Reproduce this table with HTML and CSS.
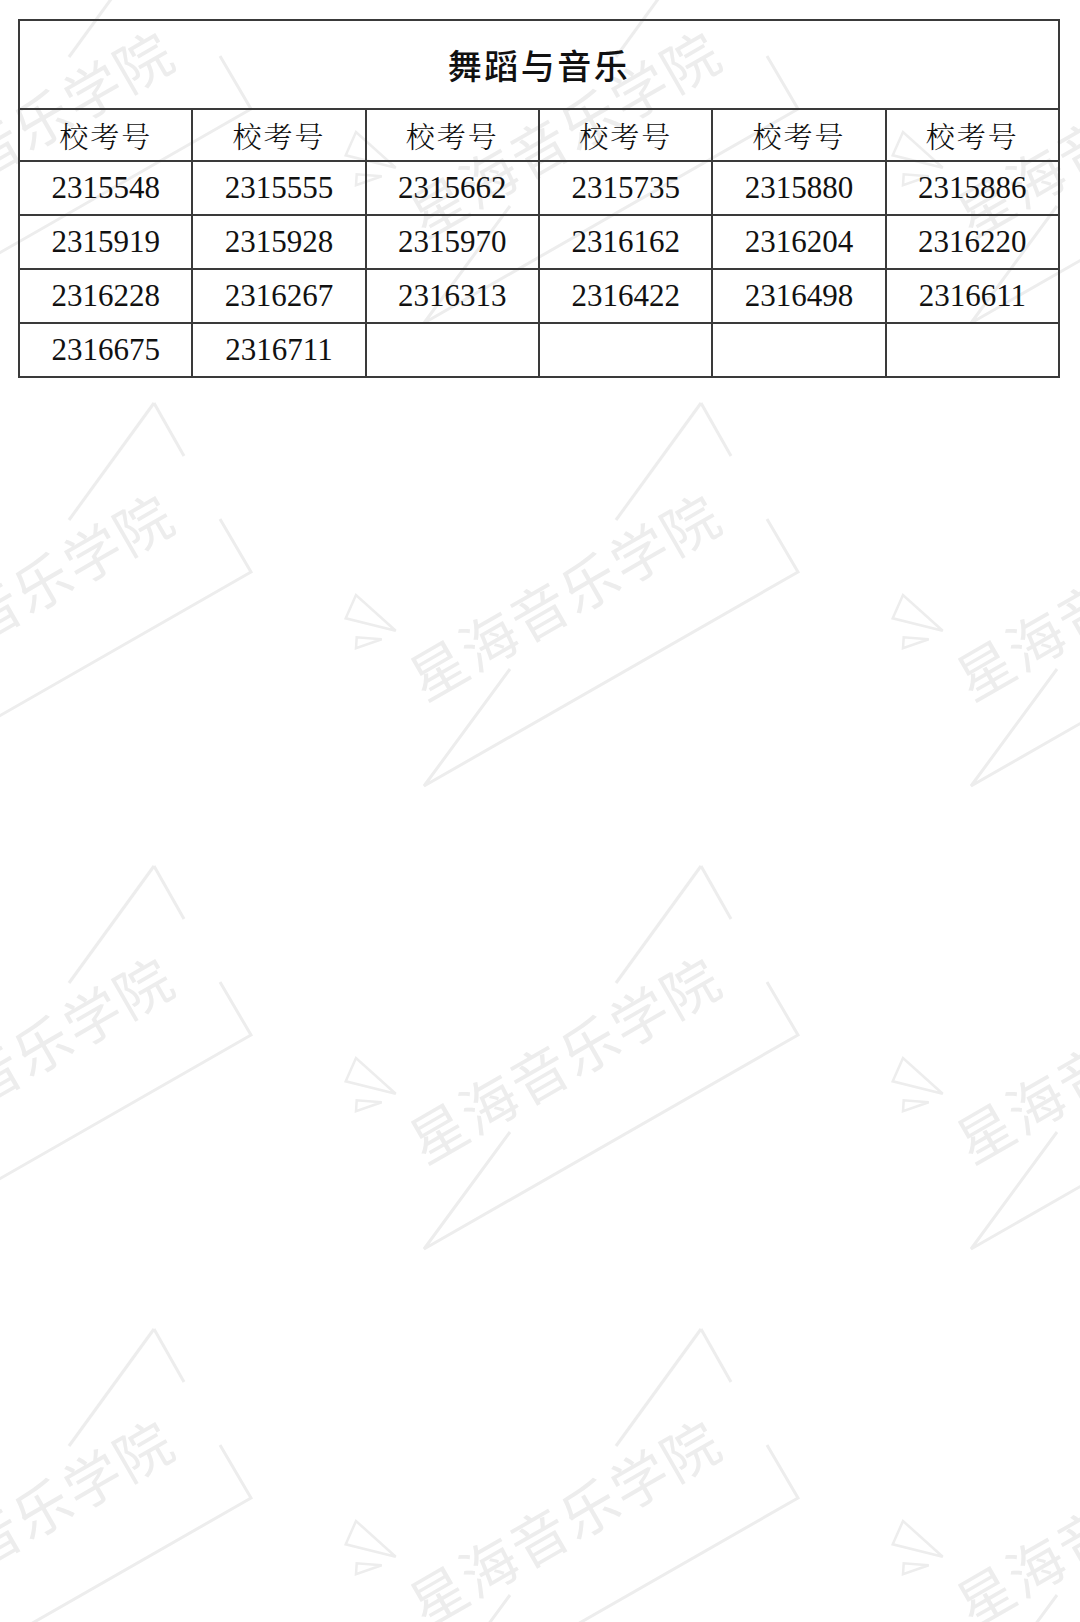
FILE: index.html
```html
<!DOCTYPE html>
<html lang="zh-CN">
<head>
<meta charset="utf-8">
<title>舞蹈与音乐</title>
<link rel="stylesheet" href="styles.css">
</head>
<body>
<svg class="watermark" width="1080" height="1622" viewBox="0 0 1080 1622" aria-hidden="true">
  <defs>
    <g id="wm-shape">
      <path class="wm-line" d="M701 403 L616 520"/>
      <path class="wm-line" d="M510 669 L424 786 L798 572 L767 519"/>
      <path class="wm-line" d="M701 403 L731 456"/>
      <polygon class="wm-thin" points="356,595 345.7,618.3 395.7,630.7"/>
      <polygon class="wm-thin" points="356.7,637.3 356,648.3 381.7,639.3"/>
    </g>
  </defs>
  <g transform="translate(-547 -463)"><use href="#wm-shape"/><text class="wm-text" x="563.5" y="594" transform="rotate(-30 563.5 594)">星海音乐学院</text></g>
  <g transform="translate(0 -463)"><use href="#wm-shape"/><text class="wm-text" x="563.5" y="594" transform="rotate(-30 563.5 594)">星海音乐学院</text></g>
  <g transform="translate(547 -463)"><use href="#wm-shape"/><text class="wm-text" x="563.5" y="594" transform="rotate(-30 563.5 594)">星海音乐学院</text></g>
  <g transform="translate(-547 0)"><use href="#wm-shape"/><text class="wm-text" x="563.5" y="594" transform="rotate(-30 563.5 594)">星海音乐学院</text></g>
  <g transform="translate(0 0)"><use href="#wm-shape"/><text class="wm-text" x="563.5" y="594" transform="rotate(-30 563.5 594)">星海音乐学院</text></g>
  <g transform="translate(547 0)"><use href="#wm-shape"/><text class="wm-text" x="563.5" y="594" transform="rotate(-30 563.5 594)">星海音乐学院</text></g>
  <g transform="translate(-547 463)"><use href="#wm-shape"/><text class="wm-text" x="563.5" y="594" transform="rotate(-30 563.5 594)">星海音乐学院</text></g>
  <g transform="translate(0 463)"><use href="#wm-shape"/><text class="wm-text" x="563.5" y="594" transform="rotate(-30 563.5 594)">星海音乐学院</text></g>
  <g transform="translate(547 463)"><use href="#wm-shape"/><text class="wm-text" x="563.5" y="594" transform="rotate(-30 563.5 594)">星海音乐学院</text></g>
  <g transform="translate(-547 926)"><use href="#wm-shape"/><text class="wm-text" x="563.5" y="594" transform="rotate(-30 563.5 594)">星海音乐学院</text></g>
  <g transform="translate(0 926)"><use href="#wm-shape"/><text class="wm-text" x="563.5" y="594" transform="rotate(-30 563.5 594)">星海音乐学院</text></g>
  <g transform="translate(547 926)"><use href="#wm-shape"/><text class="wm-text" x="563.5" y="594" transform="rotate(-30 563.5 594)">星海音乐学院</text></g>
</svg>

<main class="page">
  <table class="list">
    <tr class="title-row"><th colspan="6" class="title">舞蹈与音乐</th></tr>
    <tr class="head-row">
      <th class="head">校考号</th><th class="head">校考号</th><th class="head">校考号</th>
      <th class="head">校考号</th><th class="head">校考号</th><th class="head">校考号</th>
    </tr>
    <tr class="row">
      <td>2315548</td><td>2315555</td><td>2315662</td><td>2315735</td><td>2315880</td><td>2315886</td>
    </tr>
    <tr class="row">
      <td>2315919</td><td>2315928</td><td>2315970</td><td>2316162</td><td>2316204</td><td>2316220</td>
    </tr>
    <tr class="row">
      <td>2316228</td><td>2316267</td><td>2316313</td><td>2316422</td><td>2316498</td><td>2316611</td>
    </tr>
    <tr class="row">
      <td>2316675</td><td>2316711</td><td></td><td></td><td></td><td></td>
    </tr>
  </table>
</main>
</body>
</html>
```

FILE: styles.css
```css
html, body {
  margin: 0;
  padding: 0;
  width: 1080px;
  height: 1622px;
  overflow: hidden;
  background: #ffffff;
}

.watermark {
  position: absolute;
  top: 0;
  left: 0;
  z-index: 0;
  pointer-events: none;
}

.wm-line {
  fill: none;
  stroke: #ededed;
  stroke-width: 3;
  stroke-linejoin: miter;
}

.wm-thin {
  fill: none;
  stroke: #ededed;
  stroke-width: 2.5;
  stroke-linejoin: miter;
}

.wm-text {
  font-family: "Noto Sans CJK SC", sans-serif;
  font-size: 56px;
  font-weight: 400;
  fill: #ededed;
  text-anchor: middle;
  dominant-baseline: central;
  letter-spacing: 2px;
}

.page {
  position: relative;
  z-index: 1;
  padding: 19px 0 0 18px;
}

.list {
  width: 1042px;
  border-collapse: collapse;
  table-layout: fixed;
  background: transparent;
}

.list th,
.list td {
  border: 2px solid #3a3a3a;
  padding: 0;
  text-align: center;
  vertical-align: middle;
  color: #111;
}

.title-row {
  height: 89px;
}

.title {
  font-family: "Noto Sans CJK SC", sans-serif;
  font-size: 34px;
  font-weight: 500;
  letter-spacing: 2.5px;
  padding-left: 2px;
}

.head-row {
  height: 52px;
}

.head {
  font-family: "Noto Serif CJK SC", "Noto Sans CJK SC", serif;
  font-size: 29px;
  font-weight: 300;
  letter-spacing: 2px;
}

.row {
  height: 54px;
}

.row td {
  font-family: "Liberation Serif", "Times New Roman", serif;
  font-size: 31px;
}
```
